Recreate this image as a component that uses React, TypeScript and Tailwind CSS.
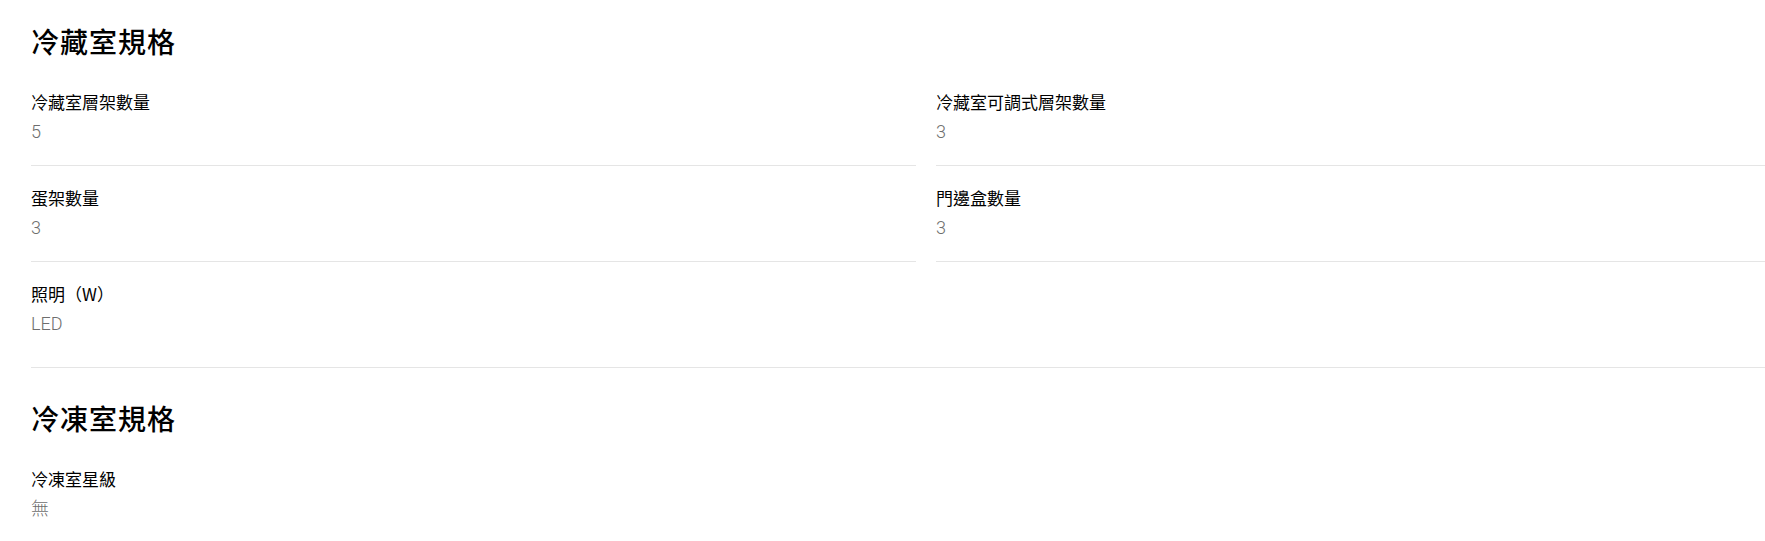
import React from "react";

type Spec = { label: string; value: string };

const fridgeSpecs: Spec[] = [
  { label: "冷藏室層架數量", value: "5" },
  { label: "冷藏室可調式層架數量", value: "3" },
  { label: "蛋架數量", value: "3" },
  { label: "門邊盒數量", value: "3" },
  { label: "照明（W）", value: "LED" },
];

const freezerSpecs: Spec[] = [{ label: "冷凍室星級", value: "無" }];

const cjk = "font-['Noto_Sans_CJK_TC','Noto_Sans',sans-serif]";

function SpecItem({ spec, last }: { spec: Spec; last: boolean }) {
  return (
    <div className={`pt-[20px] pb-[21px] ${last ? "" : "border-b border-[#e5e5e5]"}`}>
      <div className="text-[17px] leading-6 font-normal text-black">{spec.label}</div>
      <div className="mt-[6px] text-[18px] leading-6 font-light text-[#6e6e6e] font-['Roboto','Noto_Sans_CJK_TC',sans-serif]">
        {spec.value}
      </div>
    </div>
  );
}

function SpecSection({
  title,
  specs,
  className,
}: {
  title: string;
  specs: Spec[];
  className?: string;
}) {
  // rows in the final line have no divider of their own; the section border closes them
  const lastRowStart = specs.length - (specs.length % 2 === 0 ? 2 : 1);
  return (
    <section className={className}>
      <h2 className="text-[28px] leading-9 font-medium tracking-[1px] text-black mb-[11px]">{title}</h2>
      <div className="grid grid-cols-[885px_885px] gap-x-[20px]">
        {specs.map((s, i) => (
          <SpecItem key={s.label} spec={s} last={i >= lastRowStart} />
        ))}
      </div>
    </section>
  );
}

export default function App() {
  return (
    <div className={`w-full h-[541px] overflow-hidden bg-white ${cjk}`}>
      <div className="pl-[31px] pt-[23px]">
        <SpecSection
          title="冷藏室規格"
          specs={fridgeSpecs}
          className="pb-[10px] border-b border-[#e5e5e5]"
        />
        <SpecSection title="冷凍室規格" specs={freezerSpecs} className="mt-[32px]" />
      </div>
    </div>
  );
}
